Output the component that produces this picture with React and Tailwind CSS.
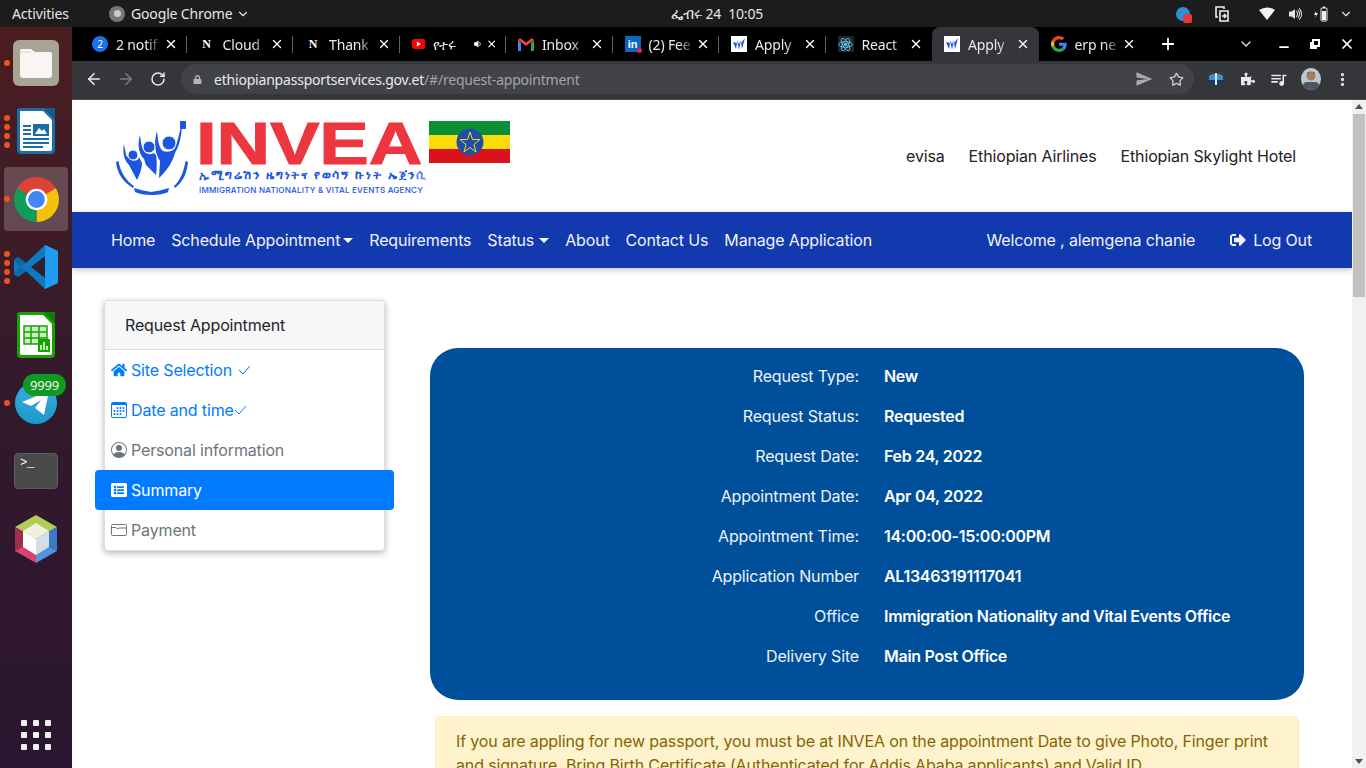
import { ArrowLeft, ArrowRight, RotateCw, Star, ChevronDown, Plus, X, Minus, EllipsisVertical } from "lucide-react";
import { FaHome, FaListAlt, FaLock, FaPuzzlePiece, FaSignOutAlt } from "react-icons/fa";
import { BsCalendar3, BsPersonCircle, BsVolumeUpFill, BsVolumeDownFill } from "react-icons/bs";
import { MdSend, MdQueueMusic } from "react-icons/md";

const ChromeLogo = ({ size = 44 }) => (
  <svg width={size} height={size} viewBox="0 0 44 44">
    <path d="M22 22 L3 11 A22 22 0 0 1 41 11 Z" fill="#db4437" />
    <path d="M22 22 L41 11 A22 22 0 0 1 22 44 Z" fill="#f4c20d" />
    <path d="M22 22 L22 44 A22 22 0 0 1 3 11 Z" fill="#0f9d58" />
    <circle cx="22" cy="22" r="10.5" fill="#fff" />
    <circle cx="22" cy="22" r="8.2" fill="#4285f4" />
  </svg>
);

const GoogleG = () => (
  <svg width="16" height="16" viewBox="0 0 48 48">
    <path fill="#EA4335" d="M24 9.5c3.5 0 6.700 1.200 9.200 3.600l6.900-6.900C35.900 2.400 30.500 0 24 0 14.600 0 6.500 5.400 2.600 13.200l8 6.200C12.500 13.600 17.800 9.500 24 9.500z" />
    <path fill="#4285F4" d="M47 24.500c0-1.600-.1-3.100-.4-4.500H24v9h13c-.6 3-2.200 5.500-4.800 7.200l7.700 6C44.400 37.900 47 31.800 47 24.500z" />
    <path fill="#FBBC05" d="M10.600 28.600C10.100 27.100 9.800 25.600 9.800 24s.3-3.100.8-4.600l-8-6.200C.9 16.500 0 20.100 0 24s.9 7.500 2.600 10.800l8-6.200z" />
    <path fill="#34A853" d="M24 48c6.500 0 11.900-2.100 15.900-5.800l-7.700-6c-2.200 1.500-4.900 2.300-8.200 2.300-6.200 0-11.500-4.100-13.400-9.900l-8 6.200C6.500 42.600 14.600 48 24 48z" />
  </svg>
);

const InveaFavicon = () => (
  <span className="w-4 h-4 bg-white flex items-center justify-center">
    <svg width="14" height="14" viewBox="0 0 14 14">
      <path d="M1 5 L4 12 L5 6 Z M5 3 L7 13 L9 3 L7 7 Z M13 1 L10 12 L9 6 Z" fill="#1c55e0" />
    </svg>
  </span>
);

const tabs = [
  { title: "2 notif", icon: <span className="w-4 h-4 rounded-full bg-[#1a73e8] text-white text-[10px] leading-4 text-center">2</span> },
  { title: "Cloud", icon: <span className="w-4 text-center text-white text-[12px] font-bold font-['Liberation_Serif',serif]">N</span> },
  { title: "Thank", icon: <span className="w-4 text-center text-white text-[12px] font-bold font-['Liberation_Serif',serif]">N</span> },
  {
    title: "የተሩ",
    audio: true,
    icon: (
      <svg width="16" height="12" viewBox="0 0 16 12">
        <rect width="16" height="12" rx="3" fill="#f00" />
        <path d="M6 3 L11 6 L6 9 Z" fill="#fff" />
      </svg>
    ),
  },
  {
    title: "Inbox",
    icon: (
      <svg width="16" height="13" viewBox="0 0 16 13">
        <path d="M0 2 L0 13 L3 13 L3 5 Z" fill="#4285f4" />
        <path d="M13 5 L13 13 L16 13 L16 2 Z" fill="#34a853" />
        <path d="M0 2 L8 8 L16 2 L14 0 L8 4.500 L2 0 Z" fill="#ea4335" />
      </svg>
    ),
  },
  {
    title: "(2) Fee",
    icon: (
      <span className="relative w-4 h-4 bg-[#0a66c2] text-white text-[11px] leading-4 font-bold text-center font-['Liberation_Sans',sans-serif]">
        in
        <span className="absolute -right-px -bottom-px w-[5px] h-[5px] rounded-full bg-[#e0245e]" />
      </span>
    ),
  },
  { title: "Apply", icon: <InveaFavicon /> },
  {
    title: "React",
    icon: (
      <span className="w-4 h-4 bg-[#20232a] flex items-center justify-center">
        <svg width="15" height="15" viewBox="0 0 24 24" fill="none" stroke="#61dafb" strokeWidth="1.300">
          <circle cx="12" cy="12" r="2" fill="#61dafb" />
          <ellipse cx="12" cy="12" rx="11" ry="4.500" />
          <ellipse cx="12" cy="12" rx="11" ry="4.500" transform="rotate(60 12 12)" />
          <ellipse cx="12" cy="12" rx="11" ry="4.500" transform="rotate(120 12 12)" />
        </svg>
      </span>
    ),
  },
  { title: "Apply", icon: <InveaFavicon />, active: true },
  { title: "erp ne", icon: <GoogleG /> },
];

const Tab = ({ tab, index }) => {
  const hideSep = tab.active || tabs[index + 1]?.active;
  return (
    <div
      className={`relative w-[106.5px] h-full flex items-center pl-3 pr-[7px] shrink-0 ${
        tab.active ? "bg-[#35363a] rounded-t-lg" : ""
      }`}
    >
      {tab.icon}
      <span className="ml-2 w-[46px] overflow-hidden whitespace-nowrap text-[14px] text-[#e8eaed] [mask-image:linear-gradient(to_right,black_65%,transparent)]">
        {tab.title}
      </span>
      {tab.audio ? <BsVolumeDownFill className="text-white ml-[2px] mr-[2px]" size={14} /> : null}
      <X size={14} strokeWidth={2.4} className="text-white ml-auto mr-[2px]" />
      {!hideSep && index < tabs.length - 1 ? (
        <span className="absolute right-0 top-[9px] h-[17px] w-px bg-[#5f6368]" />
      ) : null}
    </div>
  );
};

const dots = (n) => (
  <span className="absolute left-[4px] top-0 bottom-0 flex flex-col justify-center gap-[3px]">
    {Array.from({ length: n }).map((_, i) => (
      <span key={i} className="w-[6px] h-[6px] rounded-full bg-[#e95420]" />
    ))}
  </span>
);

const DockItem = ({ n = 0, active, children }) => (
  <div className="relative h-[68px] flex items-center justify-center">
    {n > 0 ? dots(n) : null}
    <div className={`w-[64px] h-[64px] flex items-center justify-center rounded ${active ? "bg-white/20" : ""}`}>
      {children}
    </div>
  </div>
);

const Dock = () => (
  <div className="w-[72px] shrink-0 flex flex-col pt-[2px] pb-[18px] bg-gradient-to-b from-[#4b1d20] via-[#321a2c] to-[#2b1530]">
    <DockItem n={1}>
      <svg width="46" height="46" viewBox="0 0 46 46">
        <rect width="46" height="46" rx="6" fill="#a8a392" />
        <path d="M7 11 a2 2 0 0 1 2-2 h9 l4 3 h15 a2 2 0 0 1 2 2 v21 a3 3 0 0 1-3 3 H10 a3 3 0 0 1-3-3 Z" fill="#f7f6f3" />
        <path d="M7 14 a2 2 0 0 1 2-2 h9" stroke="#d8d6ce" fill="none" />
      </svg>
    </DockItem>
    <DockItem n={4}>
      <svg width="38" height="46" viewBox="0 0 38 46">
        <path d="M3 0 H27 L38 11 V42 a4 4 0 0 1-4 4 H4 a4 4 0 0 1-4-4 V3 a3 3 0 0 1 3-3Z" fill="#1a6ea4" />
        <path d="M3 3 H26 L35 12 V41 a2 2 0 0 1-2 2 H5 a2 2 0 0 1-2-2 Z" fill="#fff" />
        <path d="M27 0 H38 V11 Z" fill="#125d8f" />
        <rect x="6" y="17" width="8" height="2" fill="#1a6ea4" />
        <rect x="6" y="21" width="8" height="2" fill="#1a6ea4" />
        <rect x="6" y="25" width="8" height="2" fill="#1a6ea4" />
        <rect x="16" y="16" width="16" height="12" fill="#1a6ea4" />
        <path d="M18 26 L22 20 L25 23 L27 21 L30 26Z" fill="#fff" />
        <rect x="6" y="30" width="26" height="2" fill="#1a6ea4" />
        <rect x="6" y="34" width="26" height="2" fill="#1a6ea4" />
        <rect x="6" y="38" width="20" height="2" fill="#1a6ea4" />
      </svg>
    </DockItem>
    <DockItem n={1} active>
      <ChromeLogo size={45} />
    </DockItem>
    <DockItem n={4}>
      <svg width="44" height="44" viewBox="0 0 44 44">
        <path d="M31 0 L44 6 V38 L31 44 L12 26 L4 32 L0 29 V15 L4 12 L12 18 Z" fill="#0e7ac4" />
        <path d="M31 0 L44 6 V38 L31 44 Z" fill="#1f9cf0" />
        <path d="M31 11 V33 L17 22 Z" fill="#2f2030" />
        <path d="M0 29 L4 32 L12 26 L7 22 L0 28Z" fill="#0b6aa8" />
        <path d="M4 12 L0 15 V16 L7 22 L12 18Z" fill="#0b6aa8" />
      </svg>
    </DockItem>
    <DockItem>
      <svg width="38" height="46" viewBox="0 0 38 46">
        <path d="M3 0 H27 L38 11 V42 a4 4 0 0 1-4 4 H4 a4 4 0 0 1-4-4 V3 a3 3 0 0 1 3-3Z" fill="#18a303" />
        <path d="M3 3 H26 L35 12 V41 a2 2 0 0 1-2 2 H5 a2 2 0 0 1-2-2 Z" fill="#fff" />
        <path d="M27 0 H38 V11 Z" fill="#0f7f02" />
        <path d="M7 14 H30 V32 H7 Z M7 20 H30 M7 26 H30 M14 14 V32 M22 14 V32" stroke="#18a303" strokeWidth="1.500" fill="#c9eec0" />
        <rect x="21" y="27" width="12" height="13" rx="1" fill="#18a303" />
        <path d="M24 38 V33 M27 38 V30 M30 38 V34" stroke="#fff" strokeWidth="1.500" />
      </svg>
    </DockItem>
    <DockItem n={1}>
      <div className="relative w-[42px] h-[42px] rounded-full bg-gradient-to-b from-[#37aee2] to-[#1e96c8] flex items-center justify-center">
        <svg width="28" height="24" viewBox="0 0 28 24">
          <path d="M0 11 L27 0 L22 24 L13 17 L19 9 L9 15 Z" fill="#fff" />
        </svg>
        <span className="absolute left-[8px] -top-[8px] w-[43px] h-[22px] rounded-full bg-[#0f9b22] text-[#f4f4e8] text-[13px] leading-[22px] text-center font-['Noto_Sans',sans-serif]">
          9999
        </span>
      </div>
    </DockItem>
    <DockItem>
      <div className="w-[44px] h-[36px] rounded-[4px] bg-[#4a4a4a] border border-[#5c5c5c] pl-[5px] text-white text-[12px] leading-[18px] font-['Liberation_Mono',monospace]">
        &gt;_
      </div>
    </DockItem>
    <DockItem>
      <svg width="42" height="48" viewBox="0 0 42 48">
        <path d="M21 0 L42 12 L21 24 L0 12Z" fill="#b3cb58" />
        <path d="M42 12 V36 L21 24Z" fill="#3d78c4" />
        <path d="M0 12 V36 L21 24Z" fill="#a02e4c" />
        <path d="M0 36 L21 48 L21 24Z" fill="#d6436e" />
        <path d="M42 36 L21 48 L21 24Z" fill="#4f94de" />
        <path d="M21 8 L34 16 L21 24 L8 16Z" fill="#eef2dd" />
        <path d="M8 16 L21 24 V40 L8 32Z" fill="#fff" />
        <path d="M34 16 L21 24 V40 L34 32Z" fill="#d5dde6" />
      </svg>
    </DockItem>
    <div className="mt-auto grid grid-cols-3 gap-[6px] w-fit mx-auto">
      {Array.from({ length: 9 }).map((_, i) => (
        <span key={i} className="w-[6px] h-[6px] rounded-[1px] bg-[#f0f0f0]" />
      ))}
    </div>
  </div>
);

const TopBar = () => (
  <div className="h-[27px] shrink-0 bg-[#1c1c1c] flex items-center text-[#e6e6e6] text-[14px] font-['Noto_Sans',sans-serif]">
    <span className="ml-3 w-[97px]">Activities</span>
    <span className="w-4 h-4 rounded-full bg-[#777] flex items-center justify-center">
      <span className="w-[7px] h-[7px] rounded-full bg-[#ccc]" />
    </span>
    <span className="ml-[6px]">Google Chrome</span>
    <ChevronDown size={14} className="ml-[4px]" />
    <span className="ml-[421px] w-[100px] whitespace-nowrap">ፌብሩ 24&nbsp;&nbsp;10:05</span>
    <span className="ml-auto flex items-center">
      <span className="relative w-[14px] h-[14px] rounded-full bg-[#2a8fdb]">
        <span className="absolute right-[-2px] bottom-[-2px] w-[9px] h-[9px] rounded-[2px] bg-[#e53935]" />
      </span>
      <svg className="ml-[25px]" width="14" height="16" viewBox="0 0 14 16" fill="none" stroke="#eee" strokeWidth="1.600">
        <path d="M9 3 V1 H1 V11 H3" />
        <path d="M5 5 H13 V15 H5 Z" />
        <path d="M7 10 H11 M9 8 L11 10 L9 12" />
      </svg>
      <svg className="ml-[30px]" width="16" height="13" viewBox="0 0 16 13">
        <path d="M0 3 Q8 -2 16 3 L8 13 Z" fill="#f2f2f2" />
      </svg>
      <BsVolumeUpFill className="ml-[13px]" size={16} />
      <svg className="ml-[10px]" width="14" height="16" viewBox="0 0 14 16">
        <path d="M2 5 L0 9 H2 L1 12 L4 7 H2 Z" fill="#eee" />
        <rect x="7" y="2" width="6" height="13" rx="1" fill="none" stroke="#eee" />
        <rect x="9" y="0.500" width="2" height="1.500" fill="#eee" />
        <rect x="8" y="5" width="4" height="9" fill="#eee" />
      </svg>
      <ChevronDown size={14} className="ml-[11px] mr-[13px]" />
    </span>
  </div>
);

const TabStrip = () => (
  <div className="h-[34px] shrink-0 bg-black flex items-center pl-2 font-['Noto_Sans',sans-serif]">
    {tabs.map((t, i) => (
      <Tab key={i} tab={t} index={i} />
    ))}
    <Plus size={18} strokeWidth={2.4} className="text-white ml-[14px] shrink-0" />
    <ChevronDown size={16} strokeWidth={2} className="text-[#ddd] ml-[61px]" />
    <Minus size={14} strokeWidth={3} className="text-white ml-[23px] mt-[6px]" />
    <svg className="ml-[19px]" width="10" height="10" viewBox="0 0 10 10" fill="none" stroke="#fff" strokeWidth="2">
      <path d="M3 1 H9 V7 H3 Z M1 3 V9 H7" />
    </svg>
    <X size={16} strokeWidth={2.6} className="text-white ml-[19px]" />
  </div>
);

const Toolbar = () => (
  <div className="h-[39px] shrink-0 bg-[#35363a] flex items-center pl-[13px] pb-[2px] font-['Noto_Sans',sans-serif] border-b border-[#4a4b4f]">
    <ArrowLeft size={18} strokeWidth={2.2} className="text-[#e8eaed]" />
    <ArrowRight size={18} strokeWidth={2.2} className="text-[#7d7e81] ml-[14px]" />
    <RotateCw size={16} strokeWidth={2.2} className="text-[#e8eaed] ml-[15px]" />
    <div className="ml-[15px] w-[1013px] h-[30px] rounded-full bg-[#424347] flex items-center pl-[12px] pr-[10px]">
      <FaLock size={9} className="text-[#b5b6b8]" />
      <span className="ml-[12px] text-[14px] tracking-[-0.2px] text-[#e8eaed] whitespace-nowrap">
        ethiopianpassportservices.gov.et<span className="text-[#a3a5a8]">/#/request-appointment</span>
      </span>
      <MdSend size={18} className="text-[#a9abad] ml-auto mr-[1px]" />
      <Star size={15} strokeWidth={2} className="text-[#d0d1d3] ml-[15px]" />
    </div>
    <svg className="ml-[14px]" width="16" height="16" viewBox="0 0 16 16">
      <path d="M1 5 L4 3 H12 L15 5 V9 H1 Z" fill="#3f8fd0" />
      <rect x="1" y="9" width="14" height="5" fill="#123c66" />
      <rect x="7" y="2" width="2" height="12" fill="#d8e8f5" />
    </svg>
    <FaPuzzlePiece size={14} className="text-[#e8eaed] ml-[17px]" />
    <MdQueueMusic size={19} className="text-[#e8eaed] ml-[14px]" />
    <svg className="ml-[12px]" width="22" height="22" viewBox="0 0 22 22">
      <clipPath id="av">
        <ellipse cx="11" cy="11" rx="10" ry="11" />
      </clipPath>
      <g clipPath="url(#av)">
        <rect width="22" height="22" fill="#b9c9cf" />
        <circle cx="11" cy="8" r="4.500" fill="#a67c63" />
        <path d="M7 6 Q11 1 15 6 L15 5 Q11 2 7 5Z" fill="#2b221d" />
        <rect x="3" y="14" width="16" height="9" rx="4" fill="#4c5564" />
      </g>
    </svg>
    <EllipsisVertical size={17} strokeWidth={2.6} className="text-[#e8eaed] ml-[12px]" />
  </div>
);

const Logo = () => (
  <div className="flex items-start">
    <svg className="mt-[21px]" width="75" height="75" viewBox="0 0 75 75" fill="#1c55e0">
      <path d="M9 23 C7 33 10 40 14 44 L22 59 C25 53 27 47 27 42 C26 40 25 38 24 36 C23 42 14 40 11 34 Z" />
      <path d="M25 14 C22 24 24 33 29 38 L31 44 L41 54 C42 46 42 40 41 34 C38 30 38 34 34 33 C28 33 26 24 25 14 Z" />
      <path d="M42 10 C38 24 41 34 45 40 L44 57 C52 50 58 40 60 32 C65 24 67 12 67 2 C64 12 63 20 60 27 C58 30 52 32 48 30 C44 27 43 20 42 10 Z" />
      <circle cx="18" cy="34" r="5" stroke="#fff" strokeWidth="1" />
      <circle cx="34" cy="26" r="6" stroke="#fff" strokeWidth="1" />
      <circle cx="54" cy="22" r="7" stroke="#fff" strokeWidth="1" />
      <path d="M1 41 L3.500 40 C5 50 11 60 19 65 L18 67 C8 61 2 52 1 41 Z" />
      <path d="M73 41 L70.500 40 C69 50 65 60 59 65 L60 67 C68 61 72 52 73 41 Z" />
      <path d="M19 67 C26 69 30 70 36 71 C42 70 48 69 54 67 L53 71 C46 75 28 75 20 71 Z" />
      <rect x="65" y="0" width="6" height="8" rx="1" />
    </svg>
    <div className="ml-[9px] mt-[19.500px] w-[226px] shrink-0">
      <div className="origin-left scale-x-[1.26] -translate-x-[3px] text-[#ec3640] text-[59px] leading-[48px] h-[48px] font-black whitespace-nowrap font-['Liberation_Sans',sans-serif] [-webkit-text-stroke:1px_#ec3640]">
        INVEA
      </div>
      <div className="text-[#1c55e0] text-[12px] leading-[14px] mt-[0.500px] tracking-[1.6px] font-bold whitespace-nowrap font-['DejaVu_Sans',sans-serif]">
        ኢሚግሬሽን ዜግነትና የወሳኝ ኩነት ኤጀንሲ
      </div>
      <div className="text-[#1c55e0] text-[8.100px] leading-[12px] mt-[2px] tracking-[0.2px] font-medium whitespace-nowrap">
        IMMIGRATION NATIONALITY &amp; VITAL EVENTS AGENCY
      </div>
    </div>
    <svg className="ml-[4px] mt-[21px]" width="81" height="42" viewBox="0 0 81 42">
      <rect width="81" height="14" fill="#0a8f35" />
      <rect y="14" width="81" height="14" fill="#fcdd09" />
      <rect y="28" width="81" height="14" fill="#da121a" />
      <circle cx="41" cy="21" r="13.500" fill="#1f4fa8" />
      <path d="M41 11 L43.500 18.500 L51 18.500 L45 23.500 L47 31 L41 26.500 L35 31 L37 23.500 L31 18.500 L38.500 18.500 Z" fill="none" stroke="#fcdd09" strokeWidth="1" />
    </svg>
  </div>
);

const Header = () => (
  <div className="h-[112px] shrink-0 flex items-start justify-between pl-[43px] pr-[56px] text-[#1e2125]">
    <Logo />
    <div className="flex gap-6 mt-[44px]">
      <span>evisa</span>
      <span>Ethiopian Airlines</span>
      <span>Ethiopian Skylight Hotel</span>
    </div>
  </div>
);

const Caret = ({ gap = "ml-[3px]" }) => (
  <span className={`inline-block ${gap} align-[3px] border-x-[5px] border-t-[5px] border-x-transparent border-t-white`} />
);

const NavBar = () => (
  <div className="h-[56px] shrink-0 bg-[#1339ae] shadow-[0_2px_6px_rgba(0,0,0,0.25)] flex items-center pl-[39px] pr-[40px] text-[#f0f3fb]">
    <div className="flex gap-4 whitespace-nowrap">
      <span>Home</span>
      <span>
        Schedule Appointment
        <Caret />
      </span>
      <span>Requirements</span>
      <span>
        Status
        <Caret gap="ml-[5px]" />
      </span>
      <span>About</span>
      <span>Contact Us</span>
      <span>Manage Application</span>
    </div>
    <span className="ml-auto whitespace-nowrap">Welcome , alemgena chanie</span>
    <FaSignOutAlt size={16} className="ml-[35px]" />
    <span className="ml-[7px] whitespace-nowrap">Log Out</span>
  </div>
);

const EnvelopeIcon = () => (
  <svg width="16" height="14" viewBox="0 0 16 14" fill="none" stroke="#6c757d" strokeWidth="1">
    <rect x="0.500" y="1.500" width="15" height="11" rx="1" />
    <path d="M0.500 4.500 H5 L6.500 6 L8 5 H15.500" />
  </svg>
);

const Check = () => (
  <svg width="13" height="10" viewBox="0 0 13 10" fill="none" stroke="#007bff" strokeWidth="1">
    <path d="M1 5 L5 9 L12 1" />
  </svg>
);

const steps = [
  { label: "Site Selection", icon: <FaHome size={16} />, done: true, color: "text-[#007bff]", checkGap: "ml-[6px]" },
  { label: "Date and time", icon: <BsCalendar3 size={16} />, done: true, color: "text-[#007bff]", checkGap: "ml-0" },
  { label: "Personal information", icon: <BsPersonCircle size={16} />, color: "text-[#6c757d]" },
  { label: "Summary", icon: <FaListAlt size={16} />, active: true },
  { label: "Payment", icon: <EnvelopeIcon />, color: "text-[#6c757d]" },
];

const SideMenu = () => (
  <div className="w-[281px] shrink-0 mt-[32px] ml-[32px] h-fit bg-white rounded-[4px] border border-[#dfdfdf] shadow-[0_2px_6px_rgba(0,0,0,0.3)]">
    <div className="h-[49px] bg-[#f7f7f7] border-b border-[#dcdcdc] pl-[20px] flex items-center text-[#212529] rounded-t-[4px]">
      Request Appointment
    </div>
    {steps.map((s) =>
      s.active ? (
        <div key={s.label} className="relative mx-[-10px] h-[40px] rounded-[4px] bg-[#007bff] text-white flex items-center pl-[16px]">
          <span className="w-[20px]">{s.icon}</span>
          {s.label}
        </div>
      ) : (
        <div key={s.label} className={`h-[40px] flex items-center pl-[6px] ${s.color}`}>
          <span className="w-[20px]">{s.icon}</span>
          {s.label}
          {s.done ? (
            <span className={s.checkGap}>
              <Check />
            </span>
          ) : null}
        </div>
      )
    )}
  </div>
);

const rows = [
  ["Request Type:", "New"],
  ["Request Status:", "Requested"],
  ["Request Date:", "Feb 24, 2022"],
  ["Appointment Date:", "Apr 04, 2022"],
  ["Appointment Time:", "14:00:00-15:00:00PM"],
  ["Application Number", "AL13463191117041"],
  ["Office", "Immigration Nationality and Vital Events Office"],
  ["Delivery Site", "Main Post Office"],
];

const Summary = () => (
  <div className="ml-[45px] w-[874px] shrink-0 mt-[80px]">
    <div className="h-[352px] rounded-[28px] bg-[#004f9a] text-white pt-[8px]">
      {rows.map(([k, v]) => (
        <div key={k} className="h-[40px] flex items-center">
          <span className="w-[429px] text-right text-[#eef3f8] whitespace-nowrap">{k}</span>
          <span className="ml-[25px] font-semibold tracking-[-0.28px] whitespace-nowrap">{v}</span>
        </div>
      ))}
    </div>
    <div className="mt-[16px] mx-[5px] rounded-[4px] bg-[#fff3cd] border border-[#ffeeba] px-[20px] pt-[12px] text-[#856404] leading-[24px]">
      <div className="whitespace-nowrap">
        If you are appling for new passport, you must be at INVEA on the appointment Date to give Photo, Finger print
      </div>
      <div className="whitespace-nowrap">
        and signature. Bring Birth Certificate (Authenticated for Addis Ababa applicants) and Valid ID.
      </div>
    </div>
  </div>
);

const Scrollbar = () => (
  <div className="w-[14px] shrink-0 bg-[#f1f1f1] flex flex-col items-center">
    <span className="mt-[4px] border-x-[4px] border-b-[5px] border-x-transparent border-b-[#505050]" />
    <span className="mt-[5px] w-[12px] h-[183px] bg-[#c1c1c1]" />
    <span className="mt-auto mb-[4px] border-x-[4px] border-t-[5px] border-x-transparent border-t-[#505050]" />
  </div>
);

export default function App() {
  return (
    <div className="w-[1366px] h-[768px] overflow-hidden flex flex-col bg-white text-[16px] tracking-[-0.15px] font-['Inter',sans-serif]">
      <TopBar />
      <div className="flex-1 flex min-h-0">
        <Dock />
        <div className="flex-1 flex flex-col min-w-0">
          <TabStrip />
          <Toolbar />
          <div className="flex-1 flex min-h-0">
            <div className="flex-1 flex flex-col min-w-0 overflow-hidden">
              <Header />
              <NavBar />
              <div className="flex items-start">
                <SideMenu />
                <Summary />
              </div>
            </div>
            <Scrollbar />
          </div>
        </div>
      </div>
    </div>
  );
}
